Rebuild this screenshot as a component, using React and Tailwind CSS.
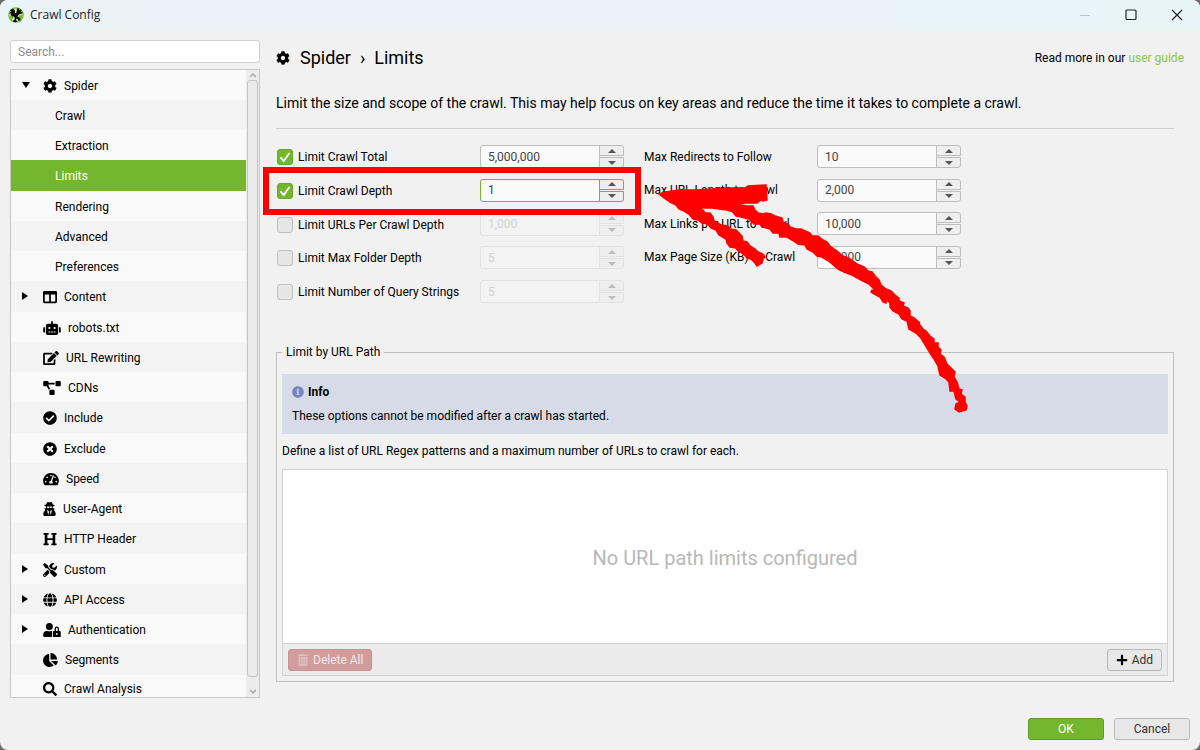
import { useState } from "react";
import {
    FaChartPie,
    FaCheckCircle,
    FaCog,
    FaColumns,
    FaEdit,
    FaGlobe,
    FaHeading,
    FaInfoCircle,
    FaPlus,
    FaProjectDiagram,
    FaRobot,
    FaSearch,
    FaTachometerAlt,
    FaTimesCircle,
    FaTools,
    FaTrashAlt,
    FaUserLock,
    FaUserSecret,
} from "react-icons/fa";

const menu = [
    { label: "Spider", icon: FaCog, width: "w-3.5", arrow: "down" },
    { label: "Crawl", child: true },
    { label: "Extraction", child: true },
    { label: "Limits", child: true },
    { label: "Rendering", child: true },
    { label: "Advanced", child: true },
    { label: "Preferences", child: true },
    { label: "Content", icon: FaColumns, width: "w-3.5", arrow: "right" },
    { label: "robots.txt", icon: FaRobot, width: "w-[18px]" },
    { label: "URL Rewriting", icon: FaEdit, width: "w-4" },
    { label: "CDNs", icon: FaProjectDiagram, width: "w-[18px]" },
    { label: "Include", icon: FaCheckCircle, width: "w-3.5" },
    { label: "Exclude", icon: FaTimesCircle, width: "w-3.5" },
    { label: "Speed", icon: FaTachometerAlt, width: "w-4" },
    { label: "User-Agent", icon: FaUserSecret, width: "w-[13px]" },
    { label: "HTTP Header", icon: FaHeading, width: "w-3.5" },
    { label: "Custom", icon: FaTools, width: "w-3.5", arrow: "right" },
    { label: "API Access", icon: FaGlobe, width: "w-3.5", arrow: "right" },
    { label: "Authentication", icon: FaUserLock, width: "w-[18px]", arrow: "right" },
    { label: "Segments", icon: FaChartPie, width: "w-[15px]" },
    { label: "Crawl Analysis", icon: FaSearch, width: "w-3.5" },
];

const crawlLimits = [
    { id: "total", label: "Limit Crawl Total", value: "5,000,000", on: true },
    { id: "depth", label: "Limit Crawl Depth", value: "1", on: true, focus: true },
    { id: "perDepth", label: "Limit URLs Per Crawl Depth", value: "1,000", on: false },
    { id: "folder", label: "Limit Max Folder Depth", value: "5", on: false },
    { id: "query", label: "Limit Number of Query Strings", value: "5", on: false },
];

const maxLimits = [
    { id: "redirects", label: "Max Redirects to Follow", value: "10" },
    { id: "urlLength", label: "Max URL Length to Crawl", value: "2,000" },
    { id: "links", label: "Max Links per URL to Crawl", value: "10,000" },
    { id: "pageSize", label: "Max Page Size (KB) to Crawl", value: "50,000" },
];

function Logo() {
    return (
        <svg viewBox="0 0 16 16" className="h-4 w-4">
            <circle cx="8" cy="8" r="7.200" fill="#dcefca" stroke="#6fb52c" strokeWidth="1.200" />
            <path d="M1.500 9.500 4 8.500l1.500 1.800-2 3zM11 8.500l3.800-.8-.7 3.500-2.600 1.300-1.500-1.600z" fill="#6fb52c" />
            <path d="m2 3.600 2.300-1.800 1.900.4 1 2.400-.5 1.500 1.400.2.800-2.700-.2-1.500 1.300-1 1.300.6-.4 1.300 1.700-.5 1.300 1.100-1.500 1.100 2 .4.100 1.300-2.400.5-1.900 1.300-.8 1.300 1.800.9 1.500 1.700-.6 1.500-1.700.3-.6-1.600-1.600-.8-.1 1.500 1.300 1.600-1.600.7-2.300-.6-.9-1.100 1.800-.6.300-2.300-1.100-1.300-1.500-.1-1.800-1.200 1-1.200-1.700-.7.400-1.500L3.600 5z" fill="#0a0f05" />
        </svg>
    );
}

function TitleBar() {
    return (
        <header className="flex h-[30px] shrink-0 items-center justify-between bg-linear-to-r from-[#eaf3f6] via-[#ebf2fa] to-[#e8f5f7] pl-2">
            <div className="flex items-center gap-1.5">
                <Logo />
                <h1 className="font-['Open_Sans',sans-serif] text-xs text-[#222]">Crawl Config</h1>
            </div>
            <div className="flex h-full">
                <button aria-label="Minimize" className="flex w-[46px] items-center justify-center">
                    <svg viewBox="0 0 12 12" className="h-3 w-3" stroke="#bcc4c8"><path d="M1 6.500h10" /></svg>
                </button>
                <button aria-label="Maximize" className="flex w-[46px] items-center justify-center">
                    <svg viewBox="0 0 12 12" className="h-3 w-3" fill="none" stroke="#222" strokeWidth="1.200"><rect x="1" y="1" width="10" height="9.500" rx="1" /></svg>
                </button>
                <button aria-label="Close" className="flex w-[46px] items-center justify-center">
                    <svg viewBox="0 0 12 12" className="h-3 w-3" stroke="#222" strokeWidth="1.200"><path d="m1 1 10 10M11 1 1 11" /></svg>
                </button>
            </div>
        </header>
    );
}

function MenuItem({ item, active, onSelect }) {
    const Icon = item.icon;
    return (
        <li className="h-[30px] bg-[#f9f9f9] even:bg-[#f3f3f3] nth-[4n]:h-[31px] last:h-[26px]">
            <button
                onClick={onSelect}
                className={active ? "flex h-full w-full items-center bg-[#74b72e] pt-px pl-2 text-white" : "flex h-full w-full items-center pt-px pl-2 text-black"}
            >
                <span className="flex w-6 pb-0.5 pl-[3px]">
                    {item.arrow === "down" && <svg viewBox="0 0 8 6" className="h-1.5 w-2"><path d="M0 0h8L4 6z" /></svg>}
                    {item.arrow === "right" && <svg viewBox="0 0 6 8" className="h-2 w-1.5"><path d="m0 0 6 4-6 4z" /></svg>}
                </span>
                {item.child
                    ? <span className="pl-3">{item.label}</span>
                    : <span className="flex items-center gap-[7px]"><Icon className={`h-3.5 ${item.width}`} />{item.label}</span>}
            </button>
        </li>
    );
}

function Sidebar() {
    const [selected, setSelected] = useState("Limits");

    return (
        <aside className="flex w-[250px] shrink-0 flex-col gap-1.5">
            <input
                type="text"
                aria-label="Search"
                placeholder="Search..."
                className="h-[23px] rounded-[3px] border border-[#cfcfcf] bg-white px-[7px] outline-none placeholder:text-[#8c8c8c]"
            />
            <div className="flex min-h-0 flex-1 border border-[#c8c8c8] bg-[#ececec]">
                <ul className="flex-1 overflow-hidden">
                    {menu.map((item) => (
                        <MenuItem key={item.label} item={item} active={selected === item.label} onSelect={() => setSelected(item.label)} />
                    ))}
                </ul>
                {/* Scrollbar */}
                <div className="flex w-[13px] flex-col items-center px-px">
                    <svg viewBox="0 0 8 6" className="my-0.5 h-1.5 w-2" fill="none" stroke="#aaa" strokeWidth="1.500"><path d="m1 5 3-3 3 3" /></svg>
                    <div className="w-full flex-1 rounded-[3px] border border-[#c4c4c4] bg-[#ebebeb]"></div>
                    <svg viewBox="0 0 8 6" className="mt-3 mb-0.5 h-1.5 w-2" fill="none" stroke="#aaa" strokeWidth="1.500"><path d="m1 1 3 3 3-3" /></svg>
                </div>
            </div>
        </aside>
    );
}

function Spinner({ id, value, label, disabled, focus }) {
    const border = focus ? "border-[#74b72e]" : disabled ? "border-[#e2e2e2]" : "border-[#bdbdbd]";
    const button = `flex flex-1 items-center justify-center border bg-[#eeeeee] ${border}`;
    const arrow = disabled ? "#bcbcbc" : "#555";
    return (
        <div className="flex h-[23px] w-36">
            <input
                id={id}
                type="text"
                aria-label={label}
                defaultValue={value}
                disabled={disabled}
                className={`min-w-0 flex-1 rounded-l-[3px] border px-[7px] outline-none ${border} ${disabled ? "bg-[#f3f3f3] text-[#d2d2d2]" : "bg-[#fafafa] text-[#444]"}`}
            />
            <div className="-ml-px flex w-[25px] flex-col gap-px">
                <button aria-label={`Increase ${label}`} disabled={disabled} className={`${button} rounded-tr-[3px]`}>
                    <svg viewBox="0 0 8 4" className="h-1 w-2" fill={arrow}><path d="M0 4h8L4 0z" /></svg>
                </button>
                <button aria-label={`Decrease ${label}`} disabled={disabled} className={`${button} rounded-br-[3px]`}>
                    <svg viewBox="0 0 8 4" className="h-1 w-2" fill={arrow}><path d="M0 0h8L4 4z" /></svg>
                </button>
            </div>
        </div>
    );
}

function LimitRow({ limit }) {
    const [on, setOn] = useState(limit.on);

    return (
        <div className="flex items-center">
            <label className="flex w-[204px] items-center gap-[5px] pt-px pl-px">
                <span className="grid">
                    <input
                        type="checkbox"
                        checked={on}
                        onChange={() => setOn(!on)}
                        className="col-start-1 row-start-1 h-4 w-4 appearance-none rounded-[3px] border border-[#bfbfbf] bg-[#e6e6e6] checked:border-[#69a828] checked:bg-[#74b72e]"
                    />
                    {on && (
                        <svg viewBox="0 0 16 16" className="pointer-events-none col-start-1 row-start-1 h-4 w-4" fill="none" stroke="#fff" strokeWidth="1.800">
                            <path d="m3.500 8.300 3.200 3.700 5.800-8" />
                        </svg>
                    )}
                </span>
                {limit.label}
            </label>
            <Spinner id={limit.id} value={limit.value} label={limit.label} disabled={!on} focus={limit.focus} />
        </div>
    );
}

function UrlPathLimits() {
    return (
        <fieldset className="flex min-h-0 flex-1 flex-col border border-[#bfbfbf] px-[5px] pb-[5px]">
            <legend className="px-1 leading-4">Limit by URL Path</legend>
            <div className="mt-3.5 bg-[#d7dbe7] px-2.5 py-2.5">
                <p className="flex items-center gap-1 leading-4 font-bold"><FaInfoCircle className="h-3 w-3 text-[#7484c4]" />Info</p>
                <p className="mt-2 leading-4">These options cannot be modified after a crawl has started.</p>
            </div>
            <p className="mt-[9px] mb-2.5 leading-4">Define a list of URL Regex patterns and a maximum number of URLs to crawl for each.</p>
            <div className="flex flex-1 flex-col border border-[#d3d3d3] bg-white">
                <p className="flex flex-1 items-center justify-center pt-0.5 text-xl text-[#b8b8b8]">No URL path limits configured</p>
                <div className="flex items-center justify-between border-t border-[#d0d0d0] bg-[#ebebeb] px-[5px] pt-[5px] pb-1">
                    <button disabled className="flex h-[22px] items-center gap-1 rounded-[3px] border border-[#c59393] bg-[#d09c9c] px-2 text-[#f5e8e8]">
                        <FaTrashAlt className="h-3 w-3 text-[#e0bcbc]" />Delete All
                    </button>
                    <button className="flex h-[22px] items-center gap-1 rounded-[3px] border border-[#b8b8b8] bg-[#e8e8e8] px-2 text-[#333]">
                        <FaPlus className="h-3 w-3 text-black" />Add
                    </button>
                </div>
            </div>
        </fieldset>
    );
}

// hand drawn marker: box round the crawl depth row and the arrow that points to it
function Marker() {
    return (
        <svg width="1200" height="750" viewBox="0 0 1200 750" className="pointer-events-none absolute top-0 left-0" fill="#f00" stroke="#f00">
            <rect x="266" y="170" width="372" height="42" fill="none" strokeWidth="6" />
            <path strokeWidth="1.500" d="M659 194 665 192 680 190 695 190 713 189 730 188 745 188 748 186 766 185 767 200 763 201 761 200 757 203 745 203 735 204 741 205 746 206 753 206 755 210 758 213 763 214 766 213 771 214 775 216 782 218 783 222 788 224 790 227 796 229 801 229 810 233 812 236 818 236 823 240 827 242 830 246 837 251 843 256 850 259 857 264 864 267 868 271 872 272 876 277 879 280 881 285 886 289 891 291 895 295 899 298 899 301 904 303 903 306 908 308 910 311 910 316 914 318 920 323 917 322 920 325 923 329 926 331 930 336 934 339 934 343 938 343 938 347 941 350 940 354 944 357 947 364 952 369 955 372 954 377 957 382 959 389 962 390 961 394 965 397 965 402 967 406 966 410 962 411 959 412 955 409 956 404 960 402 956 399 954 391 950 391 949 382 945 378 940 375 938 366 934 359 930 353 924 343 921 338 916 333 909 329 907 321 902 319 899 314 893 311 890 307 890 303 887 300 886 303 883 302 880 297 876 295 871 292 872 290 876 291 869 284 861 280 852 275 844 272 838 269 831 263 827 260 822 257 817 256 813 252 807 249 805 245 798 244 792 240 787 237 780 237 779 233 773 233 770 229 763 227 760 224 754 224 749 219 741 217 736 216 733 212 727 210 719 209 712 208 698 208 703 210 705 213 710 213 713 217 714 221 718 223 721 225 728 226 730 229 736 230 740 234 742 236 743 241 747 242 750 246 755 249 758 252 763 254 765 257 763 259 762 263 757 266 755 263 751 259 747 258 743 253 738 251 736 248 730 247 727 243 726 239 719 235 716 230 711 228 708 224 702 223 698 220 693 219 689 214 684 211 679 209 676 205 670 202 664 198Z" />
        </svg>
    );
}

export default function App() {
    return (
        <div className="min-h-screen bg-[#6c6c6c]">
            <div className="relative flex h-screen min-h-[560px] flex-col overflow-hidden rounded-lg bg-[#f1f1f1] font-['Roboto',sans-serif] text-xs text-black">
                <TitleBar />

                <div className="flex min-h-0 flex-1 gap-4 pt-2.5 pl-2.5">
                    <Sidebar />

                    {/* Right Side */}
                    <main className="flex min-w-0 flex-1 flex-col pr-[26px] pb-4">
                        <div className="-mr-2.5 flex items-center justify-between pt-1">
                            <h2 className="flex items-center gap-2.5 text-lg leading-7">
                                <FaCog className="h-3.5 w-3.5" />
                                <span>Spider&nbsp; › &nbsp;Limits</span>
                            </h2>
                            <p>Read more in our <a href="#guide" className="text-[#8cc152]">user guide</a></p>
                        </div>
                        <p className="mt-5 border-b border-[#cecece] pt-px pb-[15px] text-sm leading-5">Limit the size and scope of the crawl. This may help focus on key areas and reduce the time it takes to complete a crawl.</p>

                        <form className="mt-4 flex gap-5" onSubmit={(e) => e.preventDefault()}>
                            <div className="grid h-[158px] content-between">
                                {crawlLimits.map((limit) => <LimitRow key={limit.id} limit={limit} />)}
                            </div>
                            <div className="grid h-[124px] content-between">
                                {maxLimits.map((limit) => (
                                    <div key={limit.id} className="flex items-center">
                                        <label htmlFor={limit.id} className="w-[173px]">{limit.label}</label>
                                        <Spinner id={limit.id} value={limit.value} label={limit.label} />
                                    </div>
                                ))}
                            </div>
                        </form>

                        <div className="mt-[41px] flex min-h-0 flex-1">
                            <UrlPathLimits />
                        </div>
                    </main>
                </div>

                <footer className="flex shrink-0 justify-end gap-2.5 pt-5 pr-2.5 pb-2.5">
                    <button className="h-[22px] w-[76px] rounded-[3px] border border-[#5f9a22] bg-[#74b72e] text-white">OK</button>
                    <button className="h-[22px] w-[76px] rounded-[3px] border border-[#bababa] bg-[#e8e8e8] text-[#333]">Cancel</button>
                </footer>

                <Marker />
            </div>
        </div>
    );
}
